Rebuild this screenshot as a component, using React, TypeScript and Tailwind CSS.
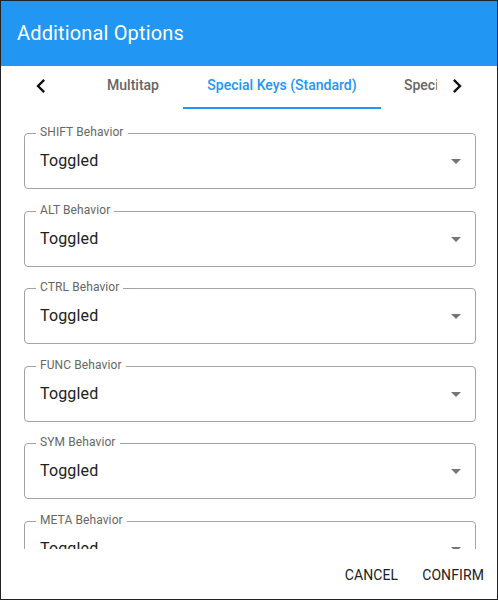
import React from "react";

const fields = ["SHIFT", "ALT", "CTRL", "FUNC", "SYM", "META"];

function Field({ name }: { name: string }) {
  return (
    <div className="relative h-[56px] w-[452px] shrink-0 rounded-[4px] border border-[#a3a3a3]">
      <span className="absolute left-[11px] top-[-10px] bg-white px-[4px] text-[12px] leading-[16px] text-[#666666] tracking-[0.1px]">
        {name} Behavior
      </span>
      <div className="flex h-full items-center pl-[15px] text-[16px] leading-[24px] text-[#212121] tracking-[0.15px]">
        Toggled
      </div>
      <svg
        className="absolute right-[7px] top-[15px] h-[24px] w-[24px] fill-[#757575]"
        viewBox="0 0 24 24"
      >
        <path d="M7 10l5 5 5-5z" />
      </svg>
    </div>
  );
}

export default function App() {
  return (
    <div className="flex h-[600px] w-[498px] flex-col overflow-hidden border border-[#222222] bg-white font-[Roboto,sans-serif]">
      <div className="flex h-[65px] shrink-0 items-center bg-[#2196f3] px-[16px] pb-[2px] text-[20px] tracking-[0.15px] text-white">
        Additional Options
      </div>
      <div className="flex h-[43px] shrink-0 px-[20px]">
        <div className="flex w-[40px] items-center justify-center pb-[4px]">
          <svg className="h-[28px] w-[28px] fill-[#111111]" viewBox="0 0 24 24">
            <path d="M15.41 16.59L10.83 12l4.58-4.59L14 6l-6 6 6 6 1.41-1.41z" />
          </svg>
        </div>
        <div className="flex w-[376px] overflow-hidden">
          <div className="ml-[22px] flex shrink-0">
            <div className="flex w-[100px] shrink-0 items-center justify-center pb-[4px] text-[14px] font-medium text-[#666666]">
              Multitap
            </div>
            <div className="relative flex w-[198px] shrink-0 items-center justify-center pb-[4px] text-[14px] font-medium text-[#2196f3] whitespace-nowrap">
              Special Keys (Standard)
              <div className="absolute bottom-0 left-0 h-[2px] w-full bg-[#2196f3]" />
            </div>
            <div className="flex shrink-0 items-center pl-[23px] pr-[24px] pb-[4px] text-[14px] font-medium text-[#666666] whitespace-nowrap">
              Special Keys (Advanced)
            </div>
          </div>
        </div>
        <div className="flex w-[40px] items-center justify-center pb-[4px]">
          <svg className="h-[28px] w-[28px] fill-[#111111]" viewBox="0 0 24 24">
            <path d="M8.59 16.59L13.17 12 8.59 7.41 10 6l6 6-6 6-1.41-1.41z" />
          </svg>
        </div>
      </div>
      <div className="h-[440px] shrink-0 overflow-hidden px-[23px] pt-[24px]">
        <div className="flex flex-col gap-[21.6px]">
          {fields.map((f) => (
            <Field key={f} name={f} />
          ))}
        </div>
      </div>
      <div className="flex h-[50px] shrink-0 items-center justify-end gap-[8px] pr-[5px] pt-[2px]">
        <button className="h-[36px] px-[8px] text-[14px] font-normal uppercase tracking-[0.1px] text-[#212121]">
          Cancel
        </button>
        <button className="h-[36px] px-[8px] text-[14px] font-normal uppercase tracking-[0.1px] text-[#212121]">
          Confirm
        </button>
      </div>
    </div>
  );
}
